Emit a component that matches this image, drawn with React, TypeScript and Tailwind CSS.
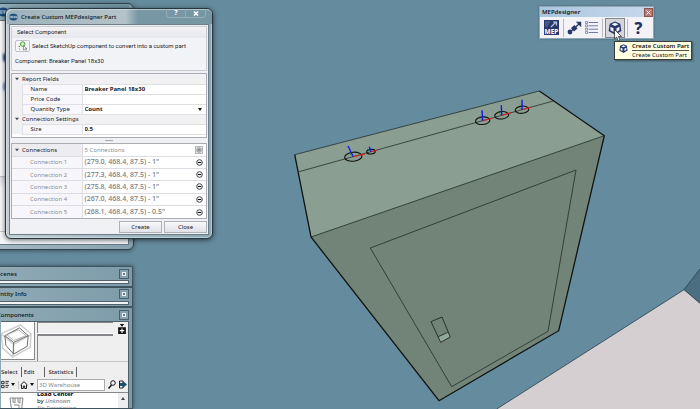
import { useState } from 'react';
import type { ReactNode } from 'react';
import { clsx } from 'clsx';

interface Connection {
  id: number;
  label: string;
  value: string;
}

const initialConnections: Connection[] = [
  { id: 1, label: 'Connection 1', value: '(279.0, 468.4, 87.5) - 1"' },
  { id: 2, label: 'Connection 2', value: '(277.3, 468.4, 87.5) - 1"' },
  { id: 3, label: 'Connection 3', value: '(275.8, 468.4, 87.5) - 1"' },
  { id: 4, label: 'Connection 4', value: '(267.0, 468.4, 87.5) - 1"' },
  { id: 5, label: 'Connection 5', value: '(268.1, 468.4, 87.5) - 0.5"' },
];

// center, tip of the blue axis, tip of the red axis, ellipse radii
const ports = [
  { x: 353.3, y: 156.7, bx: 348, by: 146, rx2: 365, ry2: 154, r: [8.7, 4.5] },
  { x: 371, y: 151.7, bx: 369.3, by: 146.7, rx2: 377.3, ry2: 150.3, r: [4.3, 2.3] },
  { x: 482.7, y: 120.7, bx: 482, by: 110.3, rx2: 492.3, ry2: 118.3, r: [7.2, 3.8] },
  { x: 501.7, y: 115.3, bx: 501.3, by: 105.3, rx2: 511, ry2: 112.7, r: [7, 3.7] },
  { x: 522, y: 109.7, bx: 522, by: 99.7, rx2: 531.3, ry2: 107.3, r: [6.8, 3.6] },
];

const Viewport = () => (
  <svg className="absolute inset-0 h-full w-full" viewBox="0 0 700 409" preserveAspectRatio="xMinYMin slice" aria-hidden="true">
    <rect width="700" height="409" fill="#658b9e" />
    <path d="M496.7 409 684 289.7 700 303.3V409Z" fill="#d6cfd2" />
    <path d="M684 289.7 700 269V303.3Z" fill="#4b6f80" />
    <path d="M496.7 409 684 289.7 700 269M684 289.7 700 303.3" fill="none" stroke="#24404c" strokeWidth="0.8" />
    <path d="M294.7 154.7 539.3 91 604.3 135.7 311 237Z" fill="#8a9f92" />
    <path d="M311 237 604.3 135.7 558.7 330.7 439 400.7Z" fill="#728378" />
    <path d="M294.7 154.7 539.3 91M311 237 604.3 135.7M299 171.7 553.3 101" stroke="#26302b" strokeWidth="0.8" />
    <path d="M539.3 91 604.3 135.7 558.7 330.7 439 400.7 311 237 294.7 154.7" fill="none" stroke="#101412" strokeWidth="1.3" />
    <path d="M370.3 248 576 170 548 331.3 451.7 386.7Z" fill="none" stroke="#2d3832" strokeWidth="0.9" />
    <path d="M438.3 336.7 447.7 332.3 450.3 337 440.7 342.3Z" fill="#91a99a" />
    <path d="M431 321.7 442 317 450.3 337 440.7 342.3ZM438.3 336.7 447.7 332.3" fill="none" stroke="#1f2823" strokeWidth="0.9" />
    {ports.map((p) => (
      <g key={p.x} fill="none">
        <ellipse cx={p.x} cy={p.y} rx={p.r[0]} ry={p.r[1]} stroke="#111" strokeWidth="1.1" transform={`rotate(-6 ${p.x} ${p.y})`} />
        <path d={`M${p.x} ${p.y}l-3.5 -3`} stroke="#17821f" strokeWidth="0.8" strokeDasharray="2 1" />
        <path d={`M${p.x} ${p.y}L${p.rx2} ${p.ry2}`} stroke="#e3231b" strokeWidth="1.1" />
        <path d={`M${p.x} ${p.y}L${p.bx} ${p.by}`} stroke="#1418e8" strokeWidth="1.4" />
      </g>
    ))}
  </svg>
);

const CubeIcon = ({ className }: { className: string }) => (
  <svg className={className} viewBox="0 0 16 16" aria-hidden="true">
    <path d="M8 0.500 14 3 15.300 11.500 8 15.800 0.700 11.500 2 3Z" fill="#27386b" />
    <path d="M8 2 12 3.800 8 5.800 4 3.800Z" fill="#f4f6fb" />
    <path d="M2.800 6.500 6.300 8.200V12.600L2.800 10.500ZM9.700 8.200 13.200 6.500 13 10.500 9.700 12.600Z" fill="#eef1f9" />
  </svg>
);

const MepBadge = ({ className }: { className: string }) => (
  <svg className={className} viewBox="0 0 20 16" aria-hidden="true">
    <ellipse cx="10" cy="8" rx="9.5" ry="7.5" fill="#174a7c" />
    <path d="M1.5 5.5h17v5h-17Z" fill="#dbe9f5" />
    <path d="M3 10V6.5L5 9 7 6.5V10M12.500 6.500H9V9.800h3.500M9 8.200h3M14.500 10V6.500h2.500v2h-2.500" fill="none" stroke="#174a7c" strokeWidth="1.1" />
  </svg>
);

const BackWindow = () => (
  <div className="absolute top-[3px] -left-2 h-[247px] w-[142px] rounded-md border border-[#31434c] bg-linear-to-r from-[#a5b9c3] to-[#86a2b0] px-1 pb-1 shadow-[0_1px_4px_#0006]">
    <div className="flex h-4 items-center justify-end gap-3 bg-linear-to-r from-[#8fadb9] to-[#6f919f] pr-3">
      <MepBadge className="mr-auto h-3 w-3" />
    </div>
    <div className="flex h-[225px] flex-col border border-[#677a83] bg-[#f5f6f8] pt-8 pl-[5px]">
      <span className="h-[9px] w-[6px] rounded-full bg-[#2f4a78] blur-[1px]" />
      <span className="mt-5 h-[9px] w-[6px] rounded-full bg-[#7d92bd] blur-[1px]" />
      <div className="mt-auto mb-3 -ml-[5px] h-14 border-y border-[#c4c6cb] bg-linear-to-b from-[#dcdde3] to-[#f5f6f8] to-20%" />
    </div>
  </div>
);

const Chevron = () => (
  <svg className="mx-auto h-1 w-1" viewBox="0 0 6 6" aria-hidden="true">
    <path d="M0 1H6L3 5Z" fill="#444b52" />
  </svg>
);

const DownArrow = () => (
  <svg className="h-[3px] w-1 shrink-0" viewBox="0 0 4 3" aria-hidden="true">
    <path d="M0 0H4L2 3Z" fill="#111" />
  </svg>
);

const SectionRow = ({ title }: { title: string }) => (
  <tr className="bg-[#f1f1f3]">
    <td className="text-center align-middle">
      <Chevron />
    </td>
    <th colSpan={2} scope="colgroup" className="h-[10px] text-left font-normal">{title}</th>
  </tr>
);

const FieldRow = ({ id, label, children }: { id: string; label: string; children: ReactNode }) => (
  <tr>
    <td className="bg-[#f1f1f3]" />
    <th scope="row" className="h-[10px] border border-[#e0e0e4] bg-[#f7f7fc] pl-2 text-left font-normal">
      <label htmlFor={id} className="block">{label}</label>
    </th>
    <td className="border-y border-[#e0e0e4] pl-[2px] font-bold">{children}</td>
  </tr>
);

const CreatePartDialog = () => {
  const [name, setName] = useState('Breaker Panel 18x30');
  const [priceCode, setPriceCode] = useState('');
  const [size, setSize] = useState('0.5');
  const [connections, setConnections] = useState(initialConnections);

  const handleRemove = (id: number) => {
    setConnections(connections.filter((c) => c.id !== id));
  };

  return (
    <section className="absolute top-2 left-[5px] w-[208px] rounded-md border border-[#26363e] bg-[#b4c4cc] bg-linear-to-r from-[#c2ced3] to-[#8aa8b5] px-[3px] pb-[3px] text-[6px] leading-[8px] text-[#20242c] shadow-[0_1px_5px_#0009,inset_0_0_0_1px_#dce6ea99]">
      <header className="-mx-[3px] flex h-[15px] items-center rounded-t-md bg-linear-to-r from-[#9bb1bb] from-0% via-[#b5c3c9] via-58% to-[#7797a5] to-64% pr-[6px] pl-[3px] shadow-[inset_1px_1px_0_#dce6ea99]">
        <MepBadge className="h-2 w-[9px]" />
        <h1 className="mr-auto ml-[3px] text-[6px] font-medium text-[#10161a]">Create Custom MEPdesigner Part</h1>
        <button type="button" aria-label="Help" className="h-[9px] w-5 self-start rounded-bl-sm border border-t-0 border-[#94adb8] text-[7px] leading-[8px] font-bold text-white">?</button>
        <button type="button" aria-label="Close window" className="flex h-[9px] w-5 items-center justify-center self-start rounded-br-sm border border-t-0 border-l-0 border-[#94adb8]">
          <svg className="h-[5px] w-[6px]" viewBox="0 0 6 5" aria-hidden="true">
            <path d="M1 0.500 5 4.500M5 0.500 1 4.500" stroke="#fff" strokeWidth="1.500" />
          </svg>
        </button>
      </header>

      <div className="flex flex-col border border-[#6c7d86] bg-[#f0f1f4] p-px">
        <div className="h-[45px] border border-[#c9cbd1] bg-[#f2f3f7] font-['Roboto','Noto_Sans',sans-serif]">
          <h2 className="h-[11px] bg-linear-to-b from-[#f3f3f7] to-[#e6e7ec] pl-[5px] leading-[10px]">Select Component</h2>
          <div className="flex items-center gap-[2px] pt-[2px] pl-[3px]">
            <button type="button" aria-label="Pick component" className="flex h-3 w-[15px] items-center justify-center rounded-xs border border-[#bfc1c8] bg-[#f7f7f9]">
              <svg className="h-[10px] w-[11px]" viewBox="0 0 12 11" aria-hidden="true">
                <path d="M4 2 6 0.800 8.500 1.800V5L6 6 4 5Z" fill="#dcebcf" stroke="#3f9a31" />
                <circle cx="2.500" cy="6" r="0.900" fill="#49a03b" />
                <path d="M2 8.500 3.500 9.500" stroke="#a08a52" />
                <path d="M7 5V10L8.300 9 9.500 10.500 10.300 10 9.300 8.300H10.800Z" fill="#fff" stroke="#444" strokeWidth="0.600" />
              </svg>
            </button>
            <span className="whitespace-nowrap">Select SketchUp component to convert into a custom part</span>
          </div>
          <p className="pt-[5px] pl-[3px]">Component: Breaker Panel 18x30</p>
        </div>

        <div className="mt-[2px] h-[65px] border border-[#a9acb4] bg-white">
          <table className="h-[60px] w-full table-fixed border-collapse">
            <colgroup>
              <col className="w-[10px]" />
              <col className="w-[60px]" />
              <col />
            </colgroup>
            <tbody>
              <SectionRow title="Report Fields" />
              <FieldRow id="name" label="Name">
                <input id="name" className="block h-2 w-full outline-none" value={name} onChange={(e) => setName(e.target.value)} />
              </FieldRow>
              <FieldRow id="price" label="Price Code">
                <input id="price" className="block h-2 w-full outline-none" value={priceCode} onChange={(e) => setPriceCode(e.target.value)} />
              </FieldRow>
              <FieldRow id="quantity" label="Quantity Type">
                <div className="flex items-center pr-1">
                  <select id="quantity" className="block h-2 w-full appearance-none outline-none" defaultValue="Count">
                    <option>Count</option>
                    <option>Length</option>
                  </select>
                  <DownArrow />
                </div>
              </FieldRow>
              <SectionRow title="Connection Settings" />
              <FieldRow id="size" label="Size">
                <input id="size" className="block h-2 w-full outline-none" value={size} onChange={(e) => setSize(e.target.value)} />
              </FieldRow>
            </tbody>
          </table>
        </div>

        <div className="mx-auto my-[2px] h-px w-2 bg-[#a4a6ad]" />

        <div className="border border-[#a9acb4] bg-white">
          <table className="h-[74px] w-full table-fixed border-collapse text-[#8b8d93]">
            <colgroup>
              <col className="w-[10px]" />
              <col className="w-[60px]" />
              <col />
              <col className="w-[14px]" />
            </colgroup>
            <thead>
              <tr className="h-3">
                <th className="bg-[#ececf1]"><Chevron /></th>
                <th scope="col" className="border-r border-[#dcdce2] bg-[#ececf1] text-left font-normal text-[#20242c]">Connections</th>
                <td className="pl-[2px]">{connections.length} Connections</td>
                <td>
                  <button type="button" aria-label="Add connection" className="mx-auto flex h-2 w-2 items-center justify-center border border-[#b6b8bd] bg-[#e6e6e9]">
                    <svg className="h-[6px] w-[6px]" viewBox="0 0 8 8" aria-hidden="true">
                      <circle cx="4" cy="4" r="3" fill="none" stroke="#77797e" />
                      <path d="M2 4H6M4 2V6" stroke="#55575c" />
                    </svg>
                  </button>
                </td>
              </tr>
            </thead>
            <tbody>
              {connections.map((c) => (
                <tr key={c.id} className="h-3 border-t border-[#dcdce2]">
                  <th colSpan={2} scope="row" className="border-r border-[#dcdce2] bg-[#f7f7fb] pl-[18px] text-left font-normal">{c.label}</th>
                  <td className="pl-[2px] text-[7px] font-medium whitespace-nowrap text-[#77797f]">{c.value}</td>
                  <td>
                    <button type="button" aria-label={`Remove ${c.label}`} className="mx-auto block h-[7px] w-[7px]" onClick={() => handleRemove(c.id)}>
                      <svg className="h-full w-full" viewBox="0 0 8 8" aria-hidden="true">
                        <circle cx="4" cy="4" r="3.200" fill="none" stroke="#26282c" />
                        <path d="M2 4H6" stroke="#111" strokeWidth="1.300" />
                      </svg>
                    </button>
                  </td>
                </tr>
              ))}
            </tbody>
          </table>
        </div>

        <div className="flex justify-end gap-[2px] pt-[2px]">
          <button type="button" className="h-3 w-[43px] border border-[#adb1ba] bg-linear-to-b from-[#f8f8fa] to-[#e1e2e8]">Create</button>
          <button type="button" className="h-3 w-[43px] border border-[#adb1ba] bg-linear-to-b from-[#f8f8fa] to-[#e1e2e8]">Close</button>
        </div>
      </div>
    </section>
  );
};

const TrayHeader = ({ title }: { title: string }) => (
  <div className="flex h-[13px] items-center justify-between">
    <h2 className="-ml-1 text-[6px] leading-[8px] font-medium text-[#0d1519]">{title}</h2>
    <button type="button" aria-label={`Close ${title}`} className="flex h-[10px] w-[10px] items-center justify-center border border-[#48606c] bg-[#86a2af]">
      <span className="h-1 w-1 border border-[#eef4f6] bg-[#5d7884]" />
    </button>
  </div>
);

const tabs = ['Select', 'Edit', 'Statistics'];

const Trays = () => {
  const [tab, setTab] = useState('Select');
  const [query, setQuery] = useState('');
  const frame = 'border border-[#3f545e] bg-linear-to-r from-[#90aab5] to-[#7d9baa] pl-1 pr-[3px]';

  return (
    <aside className="absolute top-[266px] bottom-0 -left-1 flex w-[137px] flex-col overflow-hidden text-[6px] leading-[8px] shadow-[0_0_4px_#0008]">
      <section className={clsx(frame, 'h-[21px]')}>
        <TrayHeader title="Scenes" />
        <div className="-ml-1 h-1 border border-[#50636d] bg-[#f4f4f6]" />
      </section>
      <section className={clsx(frame, 'h-[21px]')}>
        <TrayHeader title="Entity Info" />
        <div className="-ml-1 h-1 border border-[#50636d] bg-[#f4f4f6]" />
      </section>
      <section className={clsx(frame, 'flex flex-1 flex-col')}>
        <TrayHeader title="Components" />
        <div className="flex flex-1 flex-col border-t border-r border-[#50636d] bg-[#efeff0]">
          <div className="flex h-10 gap-[2px] border-b border-[#c5c5c8]">
            <div className="h-[38px] w-[34px] border-r border-b border-[#85878b] bg-white">
              <svg className="h-full w-full" viewBox="0 0 34 38" fill="none" aria-hidden="true">
                <path d="M0 12 20 3 31 12 30 26 12 36 2 27ZM0 12 13 23 31 13M13 22 12 35" stroke="#cfcfcf" strokeWidth="1.500" />
                <path d="M4 14 19 6 28 14 27 25 13 33 5 24ZM4 14 13 21 28 14M13 21V33" stroke="#6d6d6d" />
                <path d="M6 13 18 8 26 14 13 19Z" stroke="#999" strokeWidth="0.800" />
              </svg>
            </div>
            <div className="flex w-[76px] flex-col gap-px">
              <div className="h-[11px] border-t border-l border-[#85878b] shadow-[0_1px_0_#fff]" />
              <div className="flex-1 border-t-2 border-l border-[#85878b]" />
            </div>
            <button type="button" aria-label="Show secondary pane" className="mt-[2px] ml-[3px] h-[10px] w-2">
              <svg className="h-full w-full" viewBox="0 0 7 9" aria-hidden="true">
                <path d="M1.500 0H5.500L3.500 2.400ZM0 3H7V9H0Z" fill="#111" />
                <path d="M1.500 6H5.500M3.500 4V8" stroke="#fff" />
              </svg>
            </button>
          </div>
          <div role="tablist" className="flex h-[15px] items-end">
            {tabs.map((t) => (
              <button
                key={t}
                type="button"
                role="tab"
                aria-selected={tab === t}
                className={clsx(
                  'h-[10px] border-r border-[#606266] text-[6px] leading-[10px] text-[#111]',
                  t === 'Select' && 'pr-[3px]',
                  t === 'Edit' && 'pr-[10px] pl-[2px]',
                  t === 'Statistics' && 'pr-[3px] pl-[3px]',
                )}
                onClick={() => setTab(t)}
              >
                {t}
              </button>
            ))}
          </div>
          <div className="flex h-[15px] items-center gap-[3px] pr-px">
            <button type="button" aria-label="View options" className="flex items-center gap-[2px]">
              <svg className="h-[9px] w-2" viewBox="0 0 9 9" aria-hidden="true">
                <path d="M0.500 1H3.500V3.500H0.500ZM0.500 5.500H3.500V8H0.500ZM5 1H9M5 3H8M5 5.500H9M5 7.500H8" fill="none" stroke="#222" />
              </svg>
              <DownArrow />
            </button>
            <button type="button" aria-label="In model" className="flex items-center gap-[2px] border-l border-[#c1c1c4] pl-px">
              <svg className="h-2 w-2" viewBox="0 0 8 8" aria-hidden="true">
                <path d="M0.500 4 4 0.700 7.500 4M1.500 3.700V7.500H3.300V5H4.700V7.500H6.500V3.700" fill="none" stroke="#222" />
              </svg>
              <DownArrow />
            </button>
            <input
              aria-label="Search components"
              className="h-3 min-w-0 flex-1 border border-[#a8aaae] bg-white px-px text-[6px] outline-none placeholder:text-[#85878a]"
              placeholder="3D Warehouse"
              value={query}
              onChange={(e) => setQuery(e.target.value)}
            />
            <button type="button" aria-label="Search">
              <svg className="h-[9px] w-2" viewBox="0 0 8 9" aria-hidden="true">
                <circle cx="5" cy="3" r="2.300" fill="#fff" stroke="#111" />
                <path d="M3.500 5 0.500 8.500" stroke="#111" strokeWidth="1.500" />
              </svg>
            </button>
            <button type="button" aria-label="Details">
              <svg className="h-[9px] w-2" viewBox="0 0 8 9" aria-hidden="true">
                <path d="M0.500 1H4V8H0.500Z" fill="#fff" stroke="#222" />
                <path d="M1 3H4V1L8 4.500 4 8V6H1Z" fill="#19506b" />
              </svg>
            </button>
          </div>
          <div className="flex h-4 overflow-hidden border-t border-[#85878b] bg-white">
            <svg className="mt-1 ml-2 h-4 w-[15px] shrink-0" viewBox="0 0 15 16" fill="none" aria-hidden="true">
              <path d="M1 1H14L12 16H3ZM4 1V5L6 6V1M9 1V5L11 6V1M5 8H10V16" stroke="#888" />
            </svg>
            <div className="-mt-[2px] ml-[13px] flex-1 leading-[7px] whitespace-nowrap">
              <p className="font-bold text-black">Load Center</p>
              <p>by <i className="text-[#77797d]">Unknown</i></p>
              <p className="text-[#8c8e92] italic">No Description</p>
            </div>
            <div className="flex w-[10px] justify-center bg-[#ededf0] pt-1">
              <svg className="h-[3px] w-1" viewBox="0 0 4 3" aria-hidden="true">
                <path d="M0 3H4L2 0Z" fill="#444" />
              </svg>
            </div>
          </div>
        </div>
      </section>
    </aside>
  );
};

const Divider = () => <span className="h-[18px] w-px bg-[#b9bac0]" />;

const FloatingToolbar = () => (
  <div className="absolute top-[6px] left-[539px] w-[115px] border border-[#8fa8b9] bg-[#f3f3f7] text-[#0e1620] shadow-[0_0_2px_#0004]">
    <div className="flex h-[10px] items-center justify-between bg-linear-to-r from-[#a9c6e0] to-[#c7d9ea] pl-[2px]">
      <h2 className="text-[6px] leading-[8px] font-semibold">MEPdesigner</h2>
      <button type="button" aria-label="Close toolbar" className="flex h-[9px] w-[9px] items-center justify-center border border-[#8a5550] bg-[#ba7a72]">
        <svg className="h-[5px] w-[5px]" viewBox="0 0 5 5" aria-hidden="true">
          <path d="M0.500 0.500 4.500 4.500M4.500 0.500 0.500 4.500" stroke="#fff" />
        </svg>
      </button>
    </div>
    <div className="flex h-[21px] items-center pl-1">
      <button type="button" aria-label="MEP" className="mr-1">
        <svg className="h-[15px] w-[15px]" viewBox="0 0 15 15" aria-hidden="true">
          <rect width="15" height="15" fill="#27386b" />
          <path d="M1 2H6M1 4H5M1 6H4" stroke="#6878a6" />
          <path d="M7 7 12 2M9 2H12.500V5.500" fill="none" stroke="#b8c3dc" strokeWidth="1.200" />
          <text x="7.500" y="13.500" textAnchor="middle" fontSize="6.500" fontWeight="700" fill="#fff">MEP</text>
        </svg>
      </button>
      <Divider />
      <button type="button" aria-label="Connect" className="mx-[3px]">
        <svg className="h-[14px] w-[15px]" viewBox="0 0 15 14" aria-hidden="true">
          <path d="M2 12 12 3" stroke="#27386b" strokeWidth="1.300" />
          <circle cx="3" cy="11" r="2.400" fill="#27386b" />
          <path d="M8.800 0.800H14.200V6.200ZM7.500 4 10.500 7.500 7 10.500 4 7Z" fill="#27386b" />
        </svg>
      </button>
      <button type="button" aria-label="List" className="mr-1">
        <svg className="h-[13px] w-[13px]" viewBox="0 0 13 13" aria-hidden="true">
          <path d="M3.500 1.500H13M3.500 4.800H13M3.500 8.200H13M3.500 11.500H13" stroke="#6f7da5" />
          <path d="M0.500 0.500H2.500V2.500H0.500ZM0.500 3.800H2.500V5.800H0.500ZM0.500 7.200H2.500V9.200H0.500ZM0.500 10.500H2.500V12.500H0.500Z" fill="#fff" stroke="#6f7da5" strokeWidth="0.800" />
        </svg>
      </button>
      <Divider />
      <button type="button" aria-label="Create Custom Part" className="mx-[2px] flex h-5 w-5 items-center justify-center border border-[#85878e] bg-[#d6d7dd]">
        <CubeIcon className="h-[14px] w-[14px]" />
      </button>
      <Divider />
      <button type="button" aria-label="Help topics" className="ml-[6px] w-[9px] text-center text-[16px] leading-[18px] font-extrabold text-[#1f3060]">?</button>
    </div>
  </div>
);

const Tooltip = () => (
  <div role="tooltip" className="absolute top-[41px] left-[614px] flex gap-1 border border-[#3c3d36] bg-[#ffffe3] pr-[2px] pl-1 text-[6px] leading-[8px] whitespace-nowrap text-[#15150f] shadow-[1px_1px_2px_#0006]">
    <CubeIcon className="mt-[2px] h-[9px] w-[9px] shrink-0" />
    <div>
      <p className="border-b border-[#55564c] font-semibold">Create Custom Part</p>
      <p>Create Custom Part</p>
    </div>
  </div>
);

export default function App() {
  return (
    <main className="relative min-h-screen w-full overflow-hidden bg-[#658b9e] font-['Noto_Sans','Open_Sans',sans-serif]">
      <Viewport />
      <BackWindow />
      <Trays />
      <CreatePartDialog />
      <FloatingToolbar />
      <Tooltip />
      <svg className="absolute top-[29px] left-[614px] h-[13px] w-2" viewBox="0 0 8 13" aria-hidden="true">
        <path d="M0.500 0.500V10L2.700 8 4.300 12 6 11.200 4.400 7.500H7.500Z" fill="#fff" stroke="#222" strokeWidth="0.700" />
      </svg>
    </main>
  );
}
